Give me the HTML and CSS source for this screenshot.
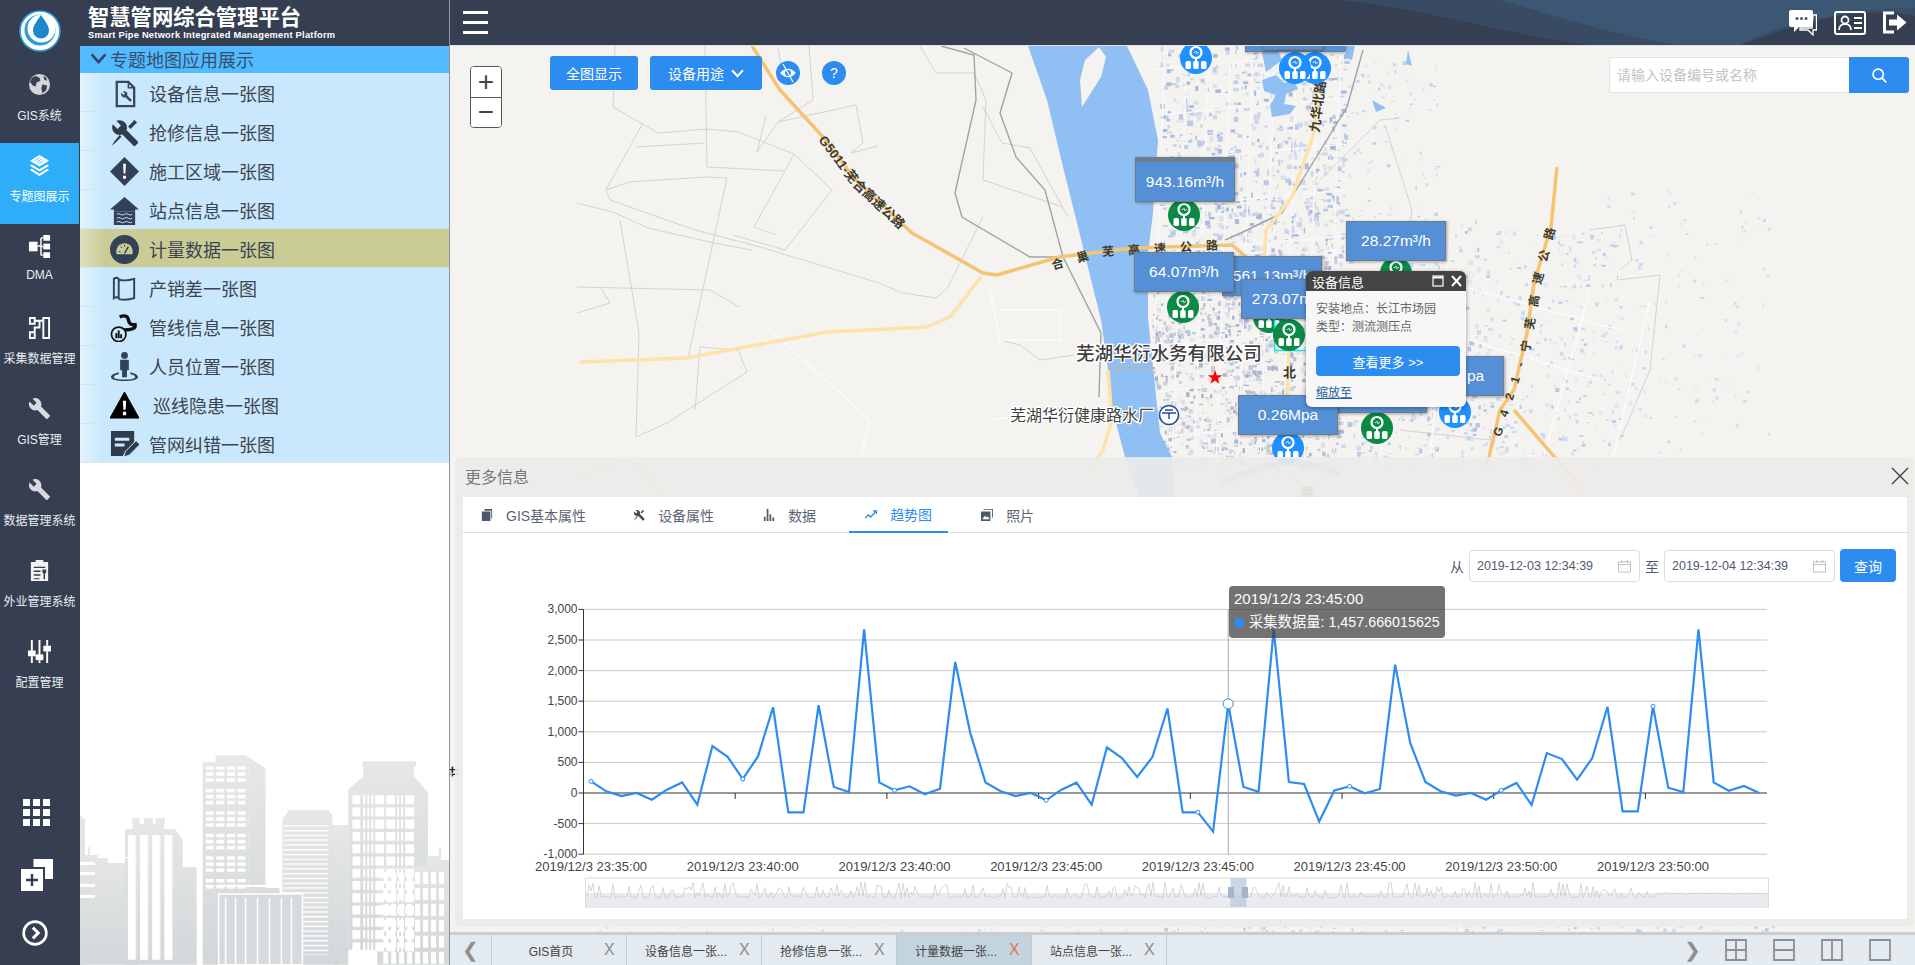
FILE: index.html
```html
<!DOCTYPE html>
<html lang="zh-CN">

<head>
    <meta charset="UTF-8">
    <title>智慧管网综合管理平台</title>
    <link rel="stylesheet" href="styles.css">
</head>

<body>
    <svg class="sprite" width="0" height="0">
        <symbol id="i-wrench" viewBox="0 0 24 24">
            <path d="M22.7 19l-9.1-9.1c.9-2.3.4-5-1.5-6.9-2-2-5-2.4-7.4-1.3L9 6 6 9 1.6 4.7C.4 7.1.9 10.1 2.9 12.1c1.9 1.9 4.6 2.4 6.9 1.5l9.1 9.1c.4.4 1 .4 1.4 0l2.3-2.3c.5-.4.5-1.1.1-1.4z" />
        </symbol>
        <symbol id="i-tools" viewBox="0 0 24 24">
            <path d="M23 19.5l-9.3-9.3c.8-2.2.3-4.8-1.5-6.6C10.300 1.700 7.500 1.300 5.200 2.300L9 6.200 6.200 9 2.300 5.200C1.300 7.500 1.700 10.300 3.600 12.200c1.800 1.800 4.400 2.300 6.600 1.500l9.300 9.300c.4.400 1 .4 1.400 0l2.100-2.100c.4-.5.4-1.100 0-1.400z" />
            <path d="M15 7l4-4 1-1.500 2.500 2.500-1.500 1-4 4zM9.500 15.500l-5 5-3 2.500 2-3.500 4.500-5.500z" />
        </symbol>
        <symbol id="i-pin" viewBox="0 0 32 32">
            <circle cx="16" cy="16" r="16" />
            <circle cx="16" cy="10.500" r="5.500" fill="none" stroke="#fff" stroke-width="2.200" />
            <path d="M13.500 10.500h1.500l1-1.500 1 3 1-1.500h1" fill="none" stroke="#fff" stroke-width=".7" />
            <path d="M16 16v4" stroke="#fff" stroke-width="2" />
            <rect x="5.500" y="19" width="5.500" height="8" rx="1.500" fill="#fff" />
            <rect x="13.200" y="19" width="5.500" height="8" rx="1.500" fill="#fff" />
            <rect x="21" y="19" width="5.500" height="8" rx="1.500" fill="#fff" />
        </symbol>
    </svg>

    <div class="app">
        <nav class="rail">
            <div class="logo">
                <svg viewBox="0 0 42 42" width="42" height="42">
                    <circle cx="21" cy="21" r="20" fill="#fff" stroke="#2b9bd9" stroke-width="1.600" />
                    <circle cx="21" cy="20" r="15.500" fill="#2b9bd9" />
                    <circle cx="22.500" cy="18.500" r="14" fill="#fff" />
                    <path d="M22 5c4 6 8 10.500 8 15.500a8 8 0 0 1-16 0C14 15.500 18 11 22 5z" fill="#1d86cf" />
                </svg>
            </div>
            <a class="rail-item" href="#">
                <svg class="rail-icon" viewBox="0 0 24 24">
                    <circle cx="12" cy="12" r="11" fill="#d3d5d8" />
                    <path d="M8 3l4 2 1 3-4 2-1 4-3-1-3-4 2-4zM15 12l5 1-1 5-4 3-1-5zM16 3l3 2 1 3-3-1z" fill="#353f51" />
                </svg>
                <span>GIS系统</span>
            </a>
            <a class="rail-item active" href="#">
                <svg class="rail-icon" viewBox="0 0 24 24" fill="#fff">
                    <path d="M12 1l10 6-10 6L2 7z" />
                    <path d="M4 11l8 5 8-5 2 1.300-10 6-10-6zM4 15.500l8 5 8-5 2 1.300L12 23 2 16.800z" />
                    <path d="M7 7l5-3M9 8.500l5-3M11 10l5-3" stroke="#2eaef9" stroke-width=".8" />
                </svg>
                <span>专题图展示</span>
            </a>
            <a class="rail-item" href="#">
                <svg class="rail-icon" viewBox="0 0 24 24" fill="#fff">
                    <rect x="1" y="7" width="9" height="10" />
                    <rect x="16" y="0" width="7" height="6" />
                    <rect x="16" y="9" width="7" height="6" />
                    <rect x="16" y="18" width="7" height="6" />
                    <path d="M10 11.500h3.500M13.500 3v18M13.500 3H16M13.500 12H16M13.500 21H16" stroke="#fff" stroke-width="1.500" fill="none" />
                </svg>
                <span>DMA</span>
            </a>
            <a class="rail-item" href="#">
                <svg class="rail-icon" viewBox="0 0 24 24" fill="none" stroke="#fff" stroke-width="2">
                    <path d="M2 2h5v6H2zM2 17h5v6H2zM16 2h6v21h-6zM7 5h5v7H7v8M12 5h4" />
                </svg>
                <span>采集数据管理</span>
            </a>
            <a class="rail-item" href="#">
                <svg class="rail-icon" fill="#d8dadd"><use href="#i-wrench" /></svg>
                <span>GIS管理</span>
            </a>
            <a class="rail-item" href="#">
                <svg class="rail-icon" fill="#d8dadd"><use href="#i-wrench" /></svg>
                <span>数据管理系统</span>
            </a>
            <a class="rail-item" href="#">
                <svg class="rail-icon" viewBox="0 0 24 24">
                    <path d="M3 3h5V1h8v2h5v20H3z" fill="#f2f2f2" />
                    <path d="M6 8h12v1.500H6zM6 12h7v1.500H6zM6 16h7v1.500H6zM6 20h6v1H6z" fill="#353f51" />
                    <path d="M15 11h4v3l-1.200 1v6h-1.600v-6L15 14z" fill="#353f51" />
                </svg>
                <span>外业管理系统</span>
            </a>
            <a class="rail-item" href="#">
                <svg class="rail-icon" viewBox="0 0 24 24" fill="#fff">
                    <path d="M3 0h2v12H3zM3 17h2v7H3zM11 0h2v16h-2zM11 21h2v3h-2zM19 0h2v6h-2zM19 12h2v12h-2z" />
                    <rect x="0" y="11" width="8" height="6" />
                    <rect x="8" y="15" width="8" height="6" />
                    <rect x="16" y="6" width="8" height="6" />
                </svg>
                <span>配置管理</span>
            </a>
            <div class="rail-tools">
                <svg class="tool-grid" viewBox="0 0 28 28" fill="#fff">
                    <path d="M0 0h7v7H0zM10 0h7v7h-7zM20 0h7v7h-7zM0 10h7v7H0zM10 10h7v7h-7zM20 10h7v7h-7zM0 20h7v7H0zM10 20h7v7h-7zM20 20h7v7h-7z" />
                </svg>
                <svg class="tool-plus" viewBox="0 0 32 32">
                    <path d="M12.500 0H32v20h-8V8H12.500z" fill="#fff" />
                    <path d="M0 10h22v22H0z" fill="#fff" />
                    <path d="M11 15v12M5 21h12" stroke="#353f51" stroke-width="2.500" />
                </svg>
                <svg class="tool-next" viewBox="0 0 24 24" fill="none" stroke="#fff" stroke-width="2.400">
                    <circle cx="12" cy="12" r="10.500" />
                    <path d="M10 7l5 5-5 5" stroke-width="2.800" />
                </svg>
            </div>
        </nav>

        <aside class="menu">
            <div class="brand">
                <div class="brand-name">智慧管网综合管理平台</div>
                <div class="brand-sub">Smart Pipe Network Integrated Management Platform</div>
            </div>
            <div class="menu-title">
                <svg viewBox="0 0 18 12" width="17" height="11" fill="none" stroke="#31465c" stroke-width="2.800">
                    <path d="M1.500 1.500L9 10l7.500-8.500" />
                </svg>
                专题地图应用展示
            </div>
            <ul class="menu-list">
                <li>
                    <svg class="menu-icon" viewBox="0 0 30 30">
                        <path d="M7 3h12l6 6v19H7z" fill="none" stroke="#3a475a" stroke-width="2.400" />
                        <path d="M19 3v6h6" fill="none" stroke="#3a475a" stroke-width="1.600" />
                        <use href="#i-wrench" x="11" y="12" width="12" height="12" fill="#3a475a" />
                    </svg>设备信息一张图
                </li>
                <li>
                    <svg class="menu-icon" viewBox="0 0 24 24" fill="#2f3c4e"><use href="#i-tools" /></svg>抢修信息一张图
                </li>
                <li>
                    <svg class="menu-icon" viewBox="0 0 30 30">
                        <path d="M15 0l15 15-15 15L0 15z" fill="#324158" />
                        <path d="M13.500 7h3l-.6 10h-1.800zM13.500 19.500h3v3h-3z" fill="#fff" />
                    </svg>施工区域一张图
                </li>
                <li>
                    <svg class="menu-icon" viewBox="0 0 30 30">
                        <path d="M15 1L30 14h-4v2H4v-2H0z" fill="#324158" />
                        <path d="M4 16h22v14H4z" fill="#324158" />
                        <path d="M7 19q2-1.500 4 0t4 0 4 0 4 0M7 23q2-1.500 4 0t4 0 4 0 4 0M7 27q2-1.500 4 0t4 0 4 0 4 0" fill="none" stroke="#cfe9fd" stroke-width="1" />
                    </svg>站点信息一张图
                </li>
                <li class="current">
                    <svg class="menu-icon" viewBox="0 0 30 30">
                        <circle cx="15" cy="15" r="15" fill="#344257" />
                        <path d="M7 20a8.500 8.500 0 1 1 16 0z" fill="#c9cc95" />
                        <path d="M15 19l4-7" stroke="#344257" stroke-width="1.500" />
                        <path d="M9 17l2 .5M11 12l1.500 1.500M15 10v2" stroke="#344257" stroke-width="1" />
                    </svg>计量数据一张图
                </li>
                <li>
                    <svg class="menu-icon" viewBox="0 0 30 30" fill="none" stroke="#33415a" stroke-width="2">
                        <path d="M4 5q3-2 5 0v20q-3-2-5 0zM9 6q8 1.500 16-1v20q-8 2.500-16 1M25 5v20" />
                    </svg>产销差一张图
                </li>
                <li>
                    <svg class="menu-icon" viewBox="0 0 30 30">
                        <path d="M10 4q8-3 9 3t7 5q1 4-5 5t-9 0" fill="none" stroke="#111" stroke-width="3.500" />
                        <circle cx="9" cy="22" r="7.500" fill="#cfe9fd" stroke="#111" stroke-width="1.800" />
                        <path d="M5.500 21h2v5h-2zM8 18h2v8H8zM10.500 22h2v4h-2z" fill="#111" />
                    </svg>管线信息一张图
                </li>
                <li>
                    <svg class="menu-icon" viewBox="0 0 30 30">
                        <circle cx="15" cy="3.500" r="3.500" fill="#33415a" />
                        <path d="M10.500 8h9v11h-2v7h-5v-7h-2z" fill="#33415a" />
                        <path d="M9 21c-5 1-8 3-8 5 0 2.500 6 4 14 4s14-1.500 14-4c0-2-3-4-8-5v2c3 .5 5 1.500 5 3 0 1.500-5 2.500-11 2.500S4 27.500 4 26c0-1.500 2-2.500 5-3z" fill="#33415a" />
                    </svg>人员位置一张图
                </li>
                <li>
                    <svg class="menu-icon" viewBox="0 0 30 30">
                        <path d="M15 1l15 27H0z" fill="#000" stroke="#000" stroke-linejoin="round" />
                        <path d="M13.300 10h3.400l-.6 9.500h-2.200zM13.300 21.500h3.400v3.500h-3.400z" fill="#fff" />
                    </svg><span class="pad-text">巡线隐患一张图</span>
                </li>
                <li>
                    <svg class="menu-icon" viewBox="0 0 30 30">
                        <path d="M1 1h24v12L13 27H1z" fill="#2f3c4e" />
                        <path d="M5 8h15v3H5zM5 14h10v3H5z" fill="#cfe9fd" />
                        <path d="M14 28l2-6L27 11l4 4-11 11z" fill="#2f3c4e" stroke="#cfe9fd" />
                    </svg>管网纠错一张图
                </li>
            </ul>
            <svg class="skyline" viewBox="80 755 370 210">
                <defs>
                    <linearGradient id="cityFill" x1="0" y1="0" x2="0" y2="1">
                        <stop offset="0" stop-color="#e5e7e8" />
                        <stop offset="1" stop-color="#d4d7d9" />
                    </linearGradient>
                    <pattern id="winA" x="206" y="766" width="10.700" height="22.600" patternUnits="userSpaceOnUse">
                        <path d="M0 0h8v3.500H0zM0 6h8v3.500H0zM0 12h8v3.500H0z" fill="#fff" />
                    </pattern>
                    <pattern id="winB" x="353" y="795" width="65" height="12.300" patternUnits="userSpaceOnUse">
                        <path d="M0 0h8v9H0zM11 0h2v9h-2zM15 0h2v9h-2zM19 0h2v9h-2zM23 0h9v9h-9zM34 0h9v9h-9zM45 0h2v9h-2zM49 0h2v9h-2zM53 0h9v9h-9z" fill="#fff" />
                    </pattern>
                    <pattern id="winC" x="284" y="825" width="45" height="4.800" patternUnits="userSpaceOnUse">
                        <path d="M0 0h45v1.500H0z" fill="#fff" />
                    </pattern>
                    <pattern id="winD" x="128" y="835" width="12.200" height="130" patternUnits="userSpaceOnUse">
                        <path d="M0 0h8v130H0z" fill="#fff" />
                    </pattern>
                    <pattern id="winE" x="384" y="872" width="8" height="16" patternUnits="userSpaceOnUse">
                        <path d="M0 0h5v12H0z" fill="#fff" />
                    </pattern>
                </defs>
                <g fill="url(#cityFill)">
                    <path d="M80 815l5 5v145h-5z" />
                    <path d="M80 855h8v-8h2v8h8v3h10v5h30v102H80z" />
                    <path d="M125 829h8v-5h-1v-6h8v6h4v-6h9v6h3v-6h9v6h-1v5h11l8 10v28h14v98H125z" />
                    <path d="M203 762h13v-7h30l20 13v120h14v77h-77z" />
                    <path d="M283 818l5-5v-3h42v3h3v12h5v140h-55z" />
                    <path d="M334 825h15v140h-15z" />
                    <path d="M349 789l15-13v-10h-1v-5h54v5h-2v10l14 16v158h-80z" />
                    <path d="M378 866h50v-10h12v-9h2v13h8v105h-72z" />
                </g>
                <g fill="#fff">
                    <rect x="80" y="862" width="15" height="3" />
                    <rect x="80" y="872" width="15" height="3" />
                    <rect x="80" y="884" width="15" height="3" />
                    <rect x="80" y="895" width="15" height="3" />
                    <rect x="216" y="885" width="62" height="2" />
                    <rect x="97" y="857" width="40" height="1" />
                </g>
                <rect x="206" y="766" width="43" height="124" fill="url(#winA)" />
                <rect x="128" y="835" width="46" height="125" fill="url(#winD)" />
                <rect x="284" y="825" width="45" height="130" fill="url(#winC)" />
                <rect x="353" y="795" width="65" height="158" fill="url(#winB)" />
                <rect x="384" y="872" width="62" height="93" fill="url(#winE)" />
                <path d="M219 965v-71h84v71z" fill="#d7dadc" stroke="#fff" stroke-width="1.500" />
                <path d="M226 898v67M236 898v67M246 898v67M258 898v67M270 898v67M282 898v67M292 898v67" stroke="#fff" stroke-width="1.500" />
            </svg>
        </aside>

        <main class="main">
            <header class="topbar">
                <svg class="topbar-wave" viewBox="450 0 1465 46" preserveAspectRatio="none">
                    <path d="M1340 0c90 10 170 36 250 46h150c60-22 120-40 175-38V0z" fill="#3f5b79" opacity=".45" />
                    <path d="M1500 0c60 18 120 38 180 46h60c50-26 120-40 175-30V0z" fill="#41698f" opacity=".4" />
                </svg>
                <button class="burger"><i></i><i></i><i></i></button>
                <div class="topbar-icons">
                    <svg class="icon-chat" viewBox="0 0 28 26">
                        <path d="M24 5h3.500v15H24v5l-5-5h-8v-2h12z" fill="none" stroke="#fff" stroke-width="1.300" />
                        <path d="M2 0h20a2 2 0 0 1 2 2v13a2 2 0 0 1-2 2H10l-5 5v-5H2a2 2 0 0 1-2-2V2a2 2 0 0 1 2-2z" fill="#fff" />
                        <circle cx="8" cy="8.500" r="1.500" fill="#3d5670" />
                        <circle cx="12.500" cy="8.500" r="1.500" fill="#3d5670" />
                        <circle cx="17" cy="8.500" r="1.500" fill="#3d5670" />
                    </svg>
                    <svg class="icon-card" viewBox="0 0 32 24">
                        <rect x="1" y="1" width="30" height="22" rx="2" fill="none" stroke="#fff" stroke-width="2" />
                        <circle cx="11" cy="9" r="3.500" fill="none" stroke="#fff" stroke-width="1.800" />
                        <path d="M5 19c0-4 3-6 6-6s6 2 6 6" fill="none" stroke="#fff" stroke-width="1.800" />
                        <path d="M20 7h8M20 12h8M20 17h8" stroke="#fff" stroke-width="2" />
                    </svg>
                    <svg class="icon-exit" viewBox="0 0 24 22">
                        <path d="M11 1.500H1.500v19H11" fill="none" stroke="#fff" stroke-width="3" />
                        <path d="M6 8h8V3l9.500 8-9.500 8v-5H6z" fill="#fff" />
                    </svg>
                </div>
            </header>

            <section class="map">
                <svg class="basemap" viewBox="450 46 1465 886" preserveAspectRatio="none">
                    <defs>
                        <filter id="soft" x="0" y="0" width="100%" height="100%">
                            <feGaussianBlur stdDeviation=".55" />
                        </filter>
                        <path id="lbl-g5011" d="M822 137L857 183L915 237" />
                        <path id="lbl-hechao" d="M1052 266L1100 252L1240 244" />
                        <path id="lbl-jiuhua" d="M1314 132L1320 86" />
                        <path id="lbl-g4" d="M1497 436L1527 343L1538 280L1553 222L1562 160" />
                    </defs>
                    <rect x="450" y="46" width="1465" height="886" fill="#f4f3f0" />
                    <g id="mapTexture" filter="url(#soft)"></g>

                    <path class="water" d="M1028 46L1047 100L1063 167L1082 243L1101 320L1108 370L1110 400L1125 457L1140 500L1175 500L1172 457L1160 433L1153 367L1148 317L1148 253L1153 213L1158 140L1148 90L1127 46z" />
                    <path d="M1099 47L1106 57L1101 77L1082 107L1080 80L1085 60z" fill="#f4f3f0" />
                    <path class="water" d="M1262 80l14-5 8 8 10-3 4 9-12 5-2 10 12 2-6 8-18 3-2-12 6-10-12-4z" />
                    <path class="water" d="M1262 52l14-6 6 14-16 12zM1345 46l10 0-3 14-6-2zM1372 100l14 8-10 4zM1408 50l4 16-6-2z" />
                    <path class="water" d="M1220 480q40-20 70-20t50 12l-2 5q-30-12-50-11t-66 20z" />

                    <g class="thin">
                        <path d="M615 46L613 107L658 133L707 129L738 132L794 154L832 190L785 250L733 235" />
                        <path d="M705 46L707 167L785 171" />
                        <path d="M643 123L606 190L610 200L695 230L764 248L879 283L903 293L936 298L948 287L983 217" />
                        <path d="M636 147L705 143" />
                        <path d="M606 190L629 182L705 177L727 178L712 247L688 358" />
                        <path d="M794 154L754 227L776 235" />
                        <path d="M577 203L613 212L648 228L714 243L752 250" />
                        <path d="M620 220L639 333L636 437L667 423L747 372L738 350L700 347L695 410" />
                        <path d="M577 287L710 290L739 307" />
                        <path d="M577 313L610 303L601 288" />
                        <path d="M766 115L757 152L778 122L856 105L863 143L851 153L878 146" />
                        <path d="M809 46L813 100L778 122M778 47L783 80" />
                        <path d="M920 46L936 73L974 73L986 100L983 180L1063 207" />
                        <path d="M983 107L1002 143L1030 148L1068 217" />
                        <path d="M1000 340L1020 345L1040 360L1074 355" />
                        <path d="M1320 180L1340 160L1380 120L1400 118M1385 125L1412 210M1412 210L1408 235" />
                        <path d="M1590 230L1625 225L1632 260L1620 270" />
                        <path d="M1490 445L1500 410M1400 430L1490 440" />
                        <path d="M1618 280L1660 275L1650 370L1620 440" />
                    </g>
                    <g class="pale">
                        <path d="M990 290L1000 340L1060 340L1060 310L1000 310M770 330L870 420L860 460M990 420L1060 410L1100 420" />
                        <path d="M1330 250L1620 330M1340 300L1600 380M1400 230L1380 460M1450 240L1430 460M1590 290L1540 470M1650 300L1610 470" />
                    </g>

                    <g class="rail-line">
                        <path d="M941 46L974 55L976 100L955 193L962 217L1030 257L1059 257" />
                        <path d="M964 48L1012 73L1000 113L1016 157L1045 190L1063 257L1101 333L1099 397" />
                        <path d="M1363 50L1347 107L1282 213L1241 233L1225 240" />
                    </g>

                    <g class="road-main">
                        <path d="M752 46L780 90L823 137L856 180L912 233L983 273L997 275L1059 257L1134 248L1232 245L1252 262" />
                        <path d="M1486 470L1500 410L1514 390L1527 333L1534 283L1551 227L1557 167" />
                        <path d="M1514 410L1583 490" />
                    </g>
                    <g class="road-light">
                        <path d="M981 277L950 317L927 327L827 332L686 358L580 362" />
                        <path d="M1319 46L1317 87L1315 130L1292 197L1266 230L1264 257" />
                        <path d="M1289 318L1289 347L1287 397" />
                        <path d="M1108 370L1112 420L1103 450L1090 470" />
                        <path d="M577 480L620 460L640 465L660 495" />
                    </g>

                    <text class="road-label"><textPath href="#lbl-g5011">G5011-芜合高速公路</textPath></text>
                    <text class="road-label wide"><textPath href="#lbl-hechao">合巢芜高速公路</textPath></text>
                    <text class="road-label"><textPath href="#lbl-jiuhua">九华北路</textPath></text>
                    <text class="road-label spaced"><textPath href="#lbl-g4">G421-宁芜高速公路</textPath></text>
                    <text class="road-label" x="1283" y="372">北</text>
                    <text class="road-label" x="1301" y="492">路</text>

                    <text class="poi-big" x="1076" y="360">芜湖华衍水务有限公司</text>
                    <text class="poi" x="1010" y="421">芜湖华衍健康路水厂</text>
                    <circle cx="1169" cy="415" r="9.500" fill="#fff" stroke="#1d4d9a" stroke-width="1.600" />
                    <path d="M1162 413h14M1169 413v6M1165 410h8" stroke="#1d4d9a" stroke-width="1.500" />
                    <path d="M1111 368h44" stroke="#f2a33c" stroke-width="2" stroke-dasharray="2 4" />
                    <path d="M1215 370l1.800 5.200h5.500l-4.400 3.300 1.600 5.300-4.500-3.200-4.500 3.200 1.600-5.300-4.400-3.300h5.500z" fill="#f00" />
                    <text class="side-cut" transform="rotate(-90 458 777)" x="458" y="777">计</text>

                    <use href="#i-pin" class="pin-blue" x="1180" y="42" width="32" height="32" />
                    <use href="#i-pin" class="pin-blue" x="1299" y="52" width="32" height="32" />
                    <use href="#i-pin" class="pin-blue" x="1279" y="52" width="32" height="32" />
                    <use href="#i-pin" class="pin-green" x="1168" y="199" width="32" height="32" />
                    <use href="#i-pin" class="pin-green" x="1167" y="291" width="32" height="32" />
                    <use href="#i-pin" class="pin-green" x="1380" y="257" width="32" height="32" />
                    <use href="#i-pin" class="pin-green" x="1253" y="301" width="32" height="32" />
                    <rect x="1274.500" y="317.500" width="36" height="33" fill="none" stroke="#16e6e6" stroke-width="1.500" />
                    <use href="#i-pin" class="pin-green" x="1273" y="319" width="32" height="32" />
                    <use href="#i-pin" class="pin-green" x="1361" y="412" width="32" height="32" />
                    <use href="#i-pin" class="pin-blue" x="1439" y="396" width="32" height="32" />
                    <use href="#i-pin" class="pin-blue" x="1272" y="432" width="32" height="32" />
                </svg>

                <div class="tag tag-top1"></div>
                <div class="tag tag-top2"></div>
                <div class="tag tag-943">943.16m³/h</div>
                <div class="tag tag-561">561.13m³/h</div>
                <div class="tag tag-64">64.07m³/h</div>
                <div class="tag tag-28">28.27m³/h</div>
                <div class="tag tag-273">273.07m³/h</div>
                <div class="tag tag-mpa1">0.25Mpa</div>
                <div class="tag tag-mpa2">0.26Mpa</div>
                <div class="tag tag-026">0.26Mpa</div>

                <div class="zoombar">
                    <button>+</button>
                    <button>−</button>
                </div>
                <div class="map-tools">
                    <button class="btn">全图显示</button>
                    <button class="btn btn-wide">设备用途
                        <svg viewBox="0 0 14 10" width="13" height="9" fill="none" stroke="#fff" stroke-width="2.400">
                            <path d="M1 1.500l6 6.500 6-6.500" />
                        </svg>
                    </button>
                    <span class="round round-eye">
                        <svg viewBox="0 0 24 24" width="24" height="24">
                            <path d="M4 12q8-8.500 16 0-8 8.500-16 0z" fill="#fff" />
                            <circle cx="12" cy="12" r="3" fill="#2d8cf0" />
                            <path d="M7 3l10 18" stroke="#fff" stroke-width="1.200" />
                        </svg>
                    </span>
                    <span class="round">?</span>
                </div>
                <div class="search">
                    <input class="search-input" placeholder="请输入设备编号或名称">
                    <button class="search-btn">
                        <svg viewBox="0 0 20 20" width="17" height="17" fill="none" stroke="#fff" stroke-width="2">
                            <circle cx="8.500" cy="8.500" r="6" />
                            <path d="M13 13l5 5" />
                        </svg>
                    </button>
                </div>

                <div class="popup">
                    <div class="popup-head">
                        <span>设备信息</span>
                        <svg viewBox="0 0 32 14" width="32" height="14" fill="none" stroke="#fff" stroke-width="1.200">
                            <rect x="1" y="2" width="10" height="10" />
                            <path d="M1 3.500h10" stroke-width="2" />
                            <path d="M20 2l9 10M29 2l-9 10" stroke-width="2" />
                        </svg>
                    </div>
                    <div class="popup-body">
                        <p>安装地点：长江市场园</p>
                        <p>类型：测流测压点</p>
                        <button class="popup-more">查看更多 &gt;&gt;</button>
                        <a class="popup-link" href="#">缩放至</a>
                    </div>
                </div>

                <div class="more">
                    <div class="more-head">
                        <span>更多信息</span>
                        <svg viewBox="0 0 18 18" width="18" height="18" fill="none" stroke="#444" stroke-width="1.400">
                            <path d="M1 1l16 16M17 1L1 17" />
                        </svg>
                    </div>
                    <div class="more-body">
                        <div class="tabs">
                            <a class="tab tab-first" href="#">
                                <svg viewBox="0 0 12 14" fill="#4d596c"><path d="M3 0h9v11h-1V2H3zM0 3h10v11H0z" /></svg>GIS基本属性
                            </a>
                            <a class="tab" href="#">
                                <svg viewBox="0 0 24 24" fill="#3d4858"><use href="#i-tools" /></svg>设备属性
                            </a>
                            <a class="tab" href="#">
                                <svg viewBox="0 0 12 14" fill="#4d596c"><path d="M0 9h2v5H0zM3.300 0h2v14h-2zM6.600 6h2v8h-2zM10 10h2v4h-2z" /></svg>数据
                            </a>
                            <a class="tab active" href="#">
                                <svg viewBox="0 0 14 12" fill="none" stroke="#2d8cf0" stroke-width="1.600"><path d="M0 11l4-4 2.500 2.500L13 3M9.500 2.500H13.500V6" /></svg>趋势图
                            </a>
                            <a class="tab" href="#">
                                <svg viewBox="0 0 14 14" fill="#4d596c"><path d="M3 0h11v10h-1V1H3zM0 3h11v11H0zM1.500 12l3-4 2 2 1.500-1.500 2 3.500z" fill-rule="evenodd" /></svg>照片
                            </a>
                        </div>
                        <div class="filter">
                            <span>从</span>
                            <div class="date-box">2019-12-03 12:34:39
                                <svg viewBox="0 0 14 14" width="13" height="14" fill="none" stroke="#bbb"><path d="M.5 2.500h13v11H.5zM.5 5.500h13M4 .5v3M10 .5v3" /></svg>
                            </div>
                            <span>至</span>
                            <div class="date-box">2019-12-04 12:34:39
                                <svg viewBox="0 0 14 14" width="13" height="14" fill="none" stroke="#bbb"><path d="M.5 2.500h13v11H.5zM.5 5.500h13M4 .5v3M10 .5v3" /></svg>
                            </div>
                            <button class="query">查询</button>
                        </div>
                        <div class="chart">
                            <svg id="trend" viewBox="463 585 1444 334" width="1444" height="334"></svg>
                            <div class="chart-tip">
                                <div>2019/12/3 23:45:00</div>
                                <div class="tip-row"><i></i>采集数据量: 1,457.666015625</div>
                            </div>
                        </div>
                    </div>
                </div>
            </section>

            <footer class="pagebar">
                <span class="page-arrow">❮</span>
                <a class="page"><span>GIS首页</span><b>X</b></a>
                <a class="page"><span>设备信息一张...</span><b>X</b></a>
                <a class="page"><span>抢修信息一张...</span><b>X</b></a>
                <a class="page on"><span>计量数据一张...</span><b>X</b></a>
                <a class="page last"><span>站点信息一张...</span><b>X</b></a>
                <span class="page-arrow next">❯</span>
                <svg class="split" viewBox="0 0 22 22"><path d="M1 1h20v20H1zM11 1v20M1 11h20" /></svg>
                <svg class="split" viewBox="0 0 22 22"><path d="M1 1h20v20H1zM1 11h20" /></svg>
                <svg class="split" viewBox="0 0 22 22"><path d="M1 1h20v20H1zM11 1v20" /></svg>
                <svg class="split" viewBox="0 0 22 22"><path d="M1 1h20v20H1z" /></svg>
            </footer>
        </main>
    </div>

    <script src="page.js"></script>
</body>

</html>
```

FILE: styles.css
```css
* {
    box-sizing: border-box;
}

html,
body {
    width: 100%;
    height: 100%;
    margin: 0;
    padding: 0;
    overflow: hidden;
    font-family: "Liberation Sans", "Noto Sans CJK SC", sans-serif;
    background: #fff;
}

button {
    border: 0;
    padding: 0;
    font-family: inherit;
}

a {
    text-decoration: none;
    color: inherit;
}

.sprite {
    position: absolute;
}

.app {
    display: flex;
    height: 965px;
}

/* left rail */
.rail {
    width: 80px;
    flex: none;
    display: flex;
    flex-direction: column;
    background: #353f51;
}

.logo {
    height: 62px;
    padding-top: 10px;
    display: flex;
    justify-content: center;
}

.rail-item {
    height: 81px;
    width: 79px;
    display: flex;
    flex-direction: column;
    align-items: center;
    padding-top: 11px;
    font-size: 12px;
    color: #eceef0;
}

.rail-item.active {
    background: #2eaef9;
    color: #fff;
}

.rail-icon {
    width: 23px;
    height: 23px;
    margin-bottom: 10px;
}

.rail-tools {
    margin-top: auto;
    padding-left: 21px;
    padding-bottom: 19px;
    display: flex;
    flex-direction: column;
}

.tool-grid {
    width: 28px;
    height: 28px;
    margin-bottom: 32px;
    margin-left: 2px;
}

.tool-plus {
    width: 32px;
    height: 32px;
    margin-bottom: 29px;
}

.tool-next {
    width: 26px;
    height: 26px;
    margin-left: 1px;
}

/* menu column */
.menu {
    width: 370px;
    flex: none;
    display: flex;
    flex-direction: column;
    border-right: 1px solid #8f9297;
    background: #fff;
}

.brand {
    height: 46px;
    padding: 6px 0 0 8px;
    background: #353f51;
    color: #fff;
}

.brand-name {
    font-size: 21.3px;
    line-height: 24px;
    font-weight: bold;
}

.brand-sub {
    font-size: 9.300px;
    line-height: 11px;
    font-weight: bold;
    letter-spacing: .25px;
}

.menu-title {
    height: 27px;
    display: flex;
    align-items: center;
    gap: 3px;
    padding: 0 0 2px 10px;
    font-size: 18px;
    color: #34506e;
    background: #52baff;
}

.menu-list {
    list-style: none;
    margin: 0;
    padding: 0;
}

.menu-list li {
    height: 39px;
    display: flex;
    align-items: center;
    padding: 2px 0 0 30px;
    font-size: 18px;
    color: #3d4450;
    background: linear-gradient(90deg, #e2f2fe, #c9e8fd 24px);
    border-bottom: 1px solid #d8e3ea;
}

.menu-list li.current {
    background: linear-gradient(90deg, #dfe0c2, #c9cc95 24px);
}

.menu-icon {
    width: 29px;
    height: 29px;
    flex: none;
    margin-right: 10px;
}

.pad-text {
    margin-left: 4px;
}

.skyline {
    margin-top: auto;
    display: block;
    width: 369px;
    height: 210px;
}

/* top bar */
.main {
    flex: 1;
    min-width: 0;
    display: flex;
    flex-direction: column;
}

.topbar {
    height: 46px;
    flex: none;
    position: relative;
    display: flex;
    align-items: center;
    padding: 0 8px 0 13px;
    background: #353f51;
    border-bottom: 1px solid #dfe3e8;
}

.topbar-wave {
    position: absolute;
    left: 0;
    top: 0;
    width: 100%;
    height: 45px;
}

.burger {
    position: relative;
    width: 25px;
    display: flex;
    flex-direction: column;
    gap: 7px;
    background: none;
}

.burger i {
    height: 3px;
    background: #fff;
}

.topbar-icons {
    position: relative;
    margin-left: auto;
    display: flex;
    align-items: center;
    gap: 17px;
}

.icon-chat {
    width: 28px;
    height: 26px;
}

.icon-card {
    width: 32px;
    height: 24px;
}

.icon-exit {
    width: 24px;
    height: 23px;
}

/* map */
.map {
    position: relative;
    flex: 1;
    overflow: hidden;
    background: #f4f3f0;
}

.basemap {
    position: absolute;
    left: 0;
    top: 0;
    width: 1465px;
    height: 886px;
}

.water {
    fill: #90c0f3;
}

.thin path {
    fill: none;
    stroke: #d2d2d8;
    stroke-width: 1;
}

.pale path {
    fill: none;
    stroke: #fbfbfd;
    stroke-width: 1.500;
}

.rail-line path {
    fill: none;
    stroke: #a2a2a4;
    stroke-width: 1.400;
}

.road-main path {
    fill: none;
    stroke: #f6c373;
    stroke-width: 3.500;
    stroke-linejoin: round;
}

.road-light path {
    fill: none;
    stroke: #fde2a9;
    stroke-width: 3.500;
    stroke-linejoin: round;
}

.road-label {
    font-size: 13px;
    font-weight: bold;
    fill: #3a3a30;
    dominant-baseline: central;
}

.road-label.wide {
    font-size: 12px;
    letter-spacing: 14px;
}

.road-label.spaced {
    font-size: 12px;
    letter-spacing: 11px;
}

.poi-big {
    font-size: 18.600px;
    font-weight: 500;
    fill: #3f3f3f;
    stroke: #fff;
    stroke-width: 2.500px;
    paint-order: stroke;
}

.poi {
    font-size: 16px;
    fill: #3f3f3f;
    stroke: #fff;
    stroke-width: 2.500px;
    paint-order: stroke;
}

.side-cut {
    font-size: 11px;
    font-weight: bold;
    fill: #222;
}

.pin-blue {
    fill: #1e90ff;
}

.pin-green {
    fill: #0a8a45;
}

/* value tags on the map */
.tag {
    position: absolute;
    width: 100px;
    height: 40px;
    display: flex;
    align-items: center;
    justify-content: center;
    font-size: 15.500px;
    color: #fff;
    background: #558fd6;
    border: 1px solid #6f7c8c;
    box-shadow: 1px 1px 3px rgba(0, 0, 0, .35);
}

.tag-top1 { left: 795px; top: -34px; }
.tag-top2 { left: 813px; top: -36px; width: 60px; z-index: 0; }
.tag-943 { left: 685px; top: 111px; height: 45px; border-top: 5px solid #6f7c8c; }
.tag-64 { left: 684px; top: 206px; }
.tag-561 { left: 772px; top: 210px; }
.tag-28 { left: 896px; top: 175px; }
.tag-273 { left: 791px; top: 233px; }
.tag-mpa1 { left: 954px; top: 310px; }
.tag-mpa2 { left: 877px; top: 327px; }
.tag-026 { left: 788px; top: 349px; }

.zoombar {
    position: absolute;
    left: 20px;
    top: 20px;
    width: 32px;
    height: 62px;
    display: flex;
    flex-direction: column;
    border: 1px solid #555;
    border-radius: 4px;
    background: #fff;
    overflow: hidden;
}

.zoombar button {
    flex: 1;
    font-size: 28px;
    line-height: 24px;
    color: #444;
    background: #fff;
}

.zoombar button + button {
    border-top: 1px solid #555;
}

.map-tools {
    position: absolute;
    left: 100px;
    top: 10px;
    display: flex;
    align-items: center;
    gap: 12px;
}

.btn {
    width: 88px;
    height: 34px;
    display: flex;
    align-items: center;
    justify-content: center;
    gap: 7px;
    font-size: 14px;
    color: #fff;
    background: #2d8cf0;
    border-radius: 3px;
}

.btn-wide {
    width: 112px;
}

.round {
    width: 24px;
    height: 24px;
    margin-left: 10px;
    display: flex;
    align-items: center;
    justify-content: center;
    font-size: 14px;
    color: #fff;
    border-radius: 50%;
    background: #2d8cf0;
}

.round-eye {
    margin-left: 2px;
}

.search {
    position: absolute;
    left: 1159px;
    top: 11px;
    width: 300px;
    height: 36px;
    display: flex;
}

.search-input {
    flex: 1;
    min-width: 0;
    padding: 0 7px;
    border: 1px solid #e4e4e4;
    border-right: 0;
    border-radius: 3px 0 0 3px;
    font-size: 14px;
    font-family: inherit;
    outline: 0;
    background: #fff;
}

.search-input::placeholder {
    color: #c4c4c4;
}

.search-btn {
    width: 60px;
    display: flex;
    align-items: center;
    justify-content: center;
    background: #2d8cf0;
    border-radius: 0 3px 3px 0;
}

/* device popup */
.popup {
    position: absolute;
    left: 856px;
    top: 225px;
    width: 160px;
    height: 136px;
    border-radius: 6px;
    overflow: hidden;
    background: #f7f7f7;
    box-shadow: 0 1px 4px rgba(0, 0, 0, .4);
}

.popup-head {
    height: 20px;
    display: flex;
    align-items: center;
    justify-content: space-between;
    padding: 0 2px 0 6px;
    font-size: 13px;
    color: #fff;
    background: #444;
}

.popup-body {
    padding: 9px 10px 0;
    font-size: 12px;
    line-height: 18px;
    color: #666;
}

.popup-body p {
    margin: 0;
}

.popup-more {
    display: block;
    width: 144px;
    height: 30px;
    margin-top: 10px;
    font-size: 13px;
    color: #fff;
    border-radius: 4px;
    background: #2d8cf0;
}

.popup-link {
    display: inline-block;
    margin-top: 8px;
    color: #1d5f9d;
    text-decoration: underline;
}

/* more info panel */
.more {
    position: absolute;
    left: 5px;
    top: 411px;
    width: 1459px;
    height: 470px;
    border-radius: 6px;
    background: rgba(235, 235, 233, .92);
    padding: 0 7px 8px 8px;
}

.more-head {
    height: 40px;
    display: flex;
    align-items: center;
    justify-content: space-between;
    padding: 0 0 2px 2px;
    font-size: 16px;
    color: #777;
}

.more-head svg {
    margin-right: -2px;
}

.more-body {
    height: 422px;
    overflow: hidden;
    background: #fff;
}

.tabs {
    height: 36px;
    display: flex;
    gap: 17px;
    padding-left: 2px;
    border-bottom: 1px solid #ddd;
}

.tab {
    height: 36px;
    display: flex;
    align-items: center;
    padding: 0 16px;
    font-size: 14px;
    color: #5b6474;
}

.tab-first {
    margin-right: -2px;
}

.tab svg {
    width: 12px;
    height: 12px;
    margin-right: 13px;
}

.tab.active {
    color: #2d8cf0;
    border-bottom: 2px solid #2d8cf0;
}

.filter {
    height: 33px;
    margin-top: 16px;
    padding-right: 11px;
    display: flex;
    align-items: center;
    justify-content: flex-end;
    gap: 5px;
    font-size: 14px;
    color: #515a6e;
}

.date-box {
    width: 171px;
    height: 32px;
    display: flex;
    align-items: center;
    justify-content: space-between;
    padding: 0 8px 0 7px;
    font-size: 12.500px;
    border: 1px solid #dcdee2;
    border-radius: 4px;
}

.query {
    width: 56px;
    height: 33px;
    font-size: 14px;
    color: #fff;
    border-radius: 4px;
    background: #2d8cf0;
}

.chart {
    position: relative;
    margin-top: 3px;
}

#trend {
    display: block;
}

.chart-tip {
    position: absolute;
    left: 766px;
    top: 1px;
    width: 216px;
    height: 52px;
    padding: 2px 5px;
    border-radius: 4px;
    font-size: 15px;
    line-height: 21px;
    color: #fff;
    white-space: nowrap;
    background: rgba(60, 60, 60, .72);
}

.tip-row {
    display: flex;
    align-items: center;
    margin-top: 3px;
    font-size: 14.300px;
}

.tip-row i {
    flex: none;
    width: 10px;
    height: 10px;
    margin-right: 5px;
    border-radius: 50%;
    background: #2d8cf0;
}

/* page tabs at the bottom */
.pagebar {
    height: 33px;
    flex: none;
    display: flex;
    align-items: center;
    border-top: 3px solid #c9cdd0;
    background: #e3ebf1;
}

.page-arrow {
    width: 41px;
    text-align: center;
    font-size: 20px;
    color: #8f8f8f;
}

.page-arrow.next {
    width: 22px;
    margin-left: auto;
    margin-right: 22px;
}

.page {
    width: 135px;
    height: 30px;
    display: flex;
    align-items: center;
    font-size: 12px;
    color: #444;
    border-left: 1px solid #c5cdd3;
}

.page.last {
    border-right: 1px solid #c5cdd3;
    width: 136px;
}

.page span {
    width: 112px;
    padding-left: 6px;
    text-align: center;
}

.page b {
    font-weight: normal;
    font-size: 16px;
    color: #8b8b8b;
}

.page.on {
    background: #c3d4de;
}

.page.on b {
    color: #e8734e;
}

.split {
    width: 22px;
    height: 22px;
    margin-right: 26px;
    fill: none;
    stroke: #8f8f8f;
    stroke-width: 1.800;
}

.split:last-child {
    margin-right: 24px;
}
```

FILE: page.js
```js
var SVG_NS = "http://www.w3.org/2000/svg";

function el(name, attrs, text) {
    var node = document.createElementNS(SVG_NS, name);
    for (var key in attrs) {
        node.setAttribute(key, attrs[key]);
    }
    if (text) {
        node.textContent = text;
    }
    return node;
}

// small seeded random so the map and brush look the same every load
var seed = 20191203;
function rnd() {
    seed = (seed * 1103515245 + 12345) % 2147483648;
    return seed / 2147483648;
}

/* ---------- trend chart ---------- */
var values = [190, 27, -49, 0, -109, 54, 174, -190, 766, 592,
    228, 598, 1402, -315, -315, 1435, 98, 16, 2674, 174,
    43, 109, -22, 71, 2141, 978, 174, 27, -49, 0,
    -120, 54, 168, -190, 745, 571, 261, 587, 1380, -315,
    -315, -630, 1457.67, 98, 22, 2674, 179, 147, -467, 43,
    109, -5, 65, 2098, 815, 179, 27, -43, 0, -109,
    43, 163, -196, 652, 554, 217, 571, 1408, -299, -299,
    1418, 87, 16, 2674, 174, 38, 114, 0];
var times = ["23:35:00", "23:40:00", "23:40:00", "23:45:00", "23:45:00", "23:45:00", "23:50:00", "23:50:00"];

var chart = document.getElementById("trend");
var left = 583.5;
var right = 1767;
var band = 15.17;

function xOf(i) {
    return left + band / 2 + band * i;
}

function yOf(v) {
    return 793 - v * 0.0612;
}

// grid and y labels
for (var v = -1000; v <= 3000; v += 500) {
    var gy = yOf(v);
    chart.appendChild(el("line", { x1: left, x2: right, y1: gy, y2: gy, stroke: v === 0 ? "#333" : "#c8c8c8" }));
    chart.appendChild(el("line", { x1: left - 5, x2: left, y1: gy, y2: gy, stroke: "#333" }));
    chart.appendChild(el("text", {
        x: left - 6,
        y: gy + 4,
        "text-anchor": "end",
        "font-size": 12,
        fill: "#444"
    }, v.toLocaleString("en-US")));
}
chart.appendChild(el("line", { x1: left, x2: left, y1: yOf(3000), y2: yOf(-1000), stroke: "#333" }));

// x labels and ticks
for (var t = 0; t < times.length; t++) {
    var at = t * 10;
    chart.appendChild(el("line", { x1: left + band * at, x2: left + band * at, y1: 793, y2: 799, stroke: "#333" }));
    chart.appendChild(el("text", {
        x: xOf(at),
        y: 871,
        "text-anchor": "middle",
        "font-size": 13,
        fill: "#444"
    }, "2019/12/3 " + times[t]));
}

// crosshair
chart.appendChild(el("line", { x1: xOf(42), x2: xOf(42), y1: yOf(3000), y2: yOf(-1000), stroke: "#aaa" }));

var pts = [];
for (var i = 0; i < values.length; i++) {
    pts.push(xOf(i).toFixed(1) + "," + yOf(values[i]).toFixed(1));
}
chart.appendChild(el("polyline", { points: pts.join(" "), fill: "none", stroke: "#2d8cf0", "stroke-width": 2.2 }));

for (var s = 0; s < values.length; s += 10) {
    chart.appendChild(el("circle", { cx: xOf(s), cy: yOf(values[s]), r: 2, fill: "#fff", stroke: "#2d8cf0" }));
}
chart.appendChild(el("circle", { cx: xOf(42), cy: yOf(values[42]), r: 5, fill: "#fff", stroke: "#2d8cf0" }));

// data zoom strip
chart.appendChild(el("rect", { x: 585.5, y: 893, width: 1183, height: 13.5, fill: "#e9ebee" }));
chart.appendChild(el("rect", { x: 585.5, y: 878, width: 1183, height: 29, fill: "none", stroke: "#d8dadd" }));
var spark = [];
for (var sx = 587; sx < 1768; sx += 2) {
    var h = rnd() < 0.3 ? 4 + rnd() * 12 : rnd() * 2.5;
    if (sx > 1655) {
        h = rnd() * 1;
    }
    spark.push(sx + "," + ((sx > 1655 ? 894 : 898) - h).toFixed(1));
}
chart.appendChild(el("polyline", { points: spark.join(" "), fill: "none", stroke: "#c9cbd0", "stroke-width": 0.8 }));
chart.appendChild(el("rect", { x: 1230.5, y: 878, width: 16, height: 29, fill: "#b9c9de", opacity: 0.75 }));
chart.appendChild(el("rect", { x: 1228, y: 887, width: 6, height: 11, fill: "#a5b5c9" }));
chart.appendChild(el("rect", { x: 1242, y: 887, width: 6, height: 11, fill: "#a5b5c9" }));

/* ---------- map texture ---------- */
var texture = document.getElementById("mapTexture");
var regions = [
    { x0: 1160, y0: 46, x1: 1345, y1: 250, n: 650, big: 5, colors: ["#a9b9dc", "#bccae6", "#cdd6ea", "#dce0ea"] },
    { x0: 1150, y0: 250, x1: 1340, y1: 470, n: 1300, big: 4, colors: ["#a9b4cf", "#bcc5d8", "#cfd4de", "#dfe1e6"] },
    { x0: 1340, y0: 60, x1: 1440, y1: 220, n: 90, big: 3, colors: ["#b7d3f3", "#cfdff3", "#dde5ef"] },
    { x0: 1340, y0: 220, x1: 1480, y1: 470, n: 420, big: 4, colors: ["#b6c6e4", "#ccd8ee", "#dbe3ef", "#c4dcf6"] },
    { x0: 1480, y0: 230, x1: 1620, y1: 470, n: 300, big: 3.5, colors: ["#bccbe6", "#cfdbef", "#dee6f2", "#c6def7"] },
    { x0: 1600, y0: 190, x1: 1770, y1: 470, n: 130, big: 3, colors: ["#cfdff3", "#dee8f4", "#c4dcf6"] },
    { x0: 1150, y0: 900, x1: 1780, y1: 932, n: 380, big: 3, colors: ["#c0cbe0", "#d5dbe8", "#bcd6f4"] },
    { x0: 577, y0: 900, x1: 1150, y1: 932, n: 120, big: 2, colors: ["#d5dbe8", "#e0e3ea"] }
];

regions.forEach(function (r) {
    for (var k = 0; k < r.n; k++) {
        texture.appendChild(el("rect", {
            x: (r.x0 + rnd() * (r.x1 - r.x0)).toFixed(1),
            y: (r.y0 + rnd() * (r.y1 - r.y0)).toFixed(1),
            width: (1 + rnd() * r.big).toFixed(1),
            height: (1 + rnd() * r.big).toFixed(1),
            fill: r.colors[Math.floor(rnd() * r.colors.length)]
        }));
    }
});

// white street grid over the built-up area
for (var g = 0; g < 9; g++) {
    texture.appendChild(el("line", { x1: 1165 + g * 22, y1: 46, x2: 1150 + g * 22, y2: 470, stroke: "#f8f8fa", "stroke-width": 1.5 }));
    texture.appendChild(el("line", { x1: 1150, y1: 70 + g * 46, x2: 1345, y2: 52 + g * 46, stroke: "#f8f8fa", "stroke-width": 1.5 }));
}
```
